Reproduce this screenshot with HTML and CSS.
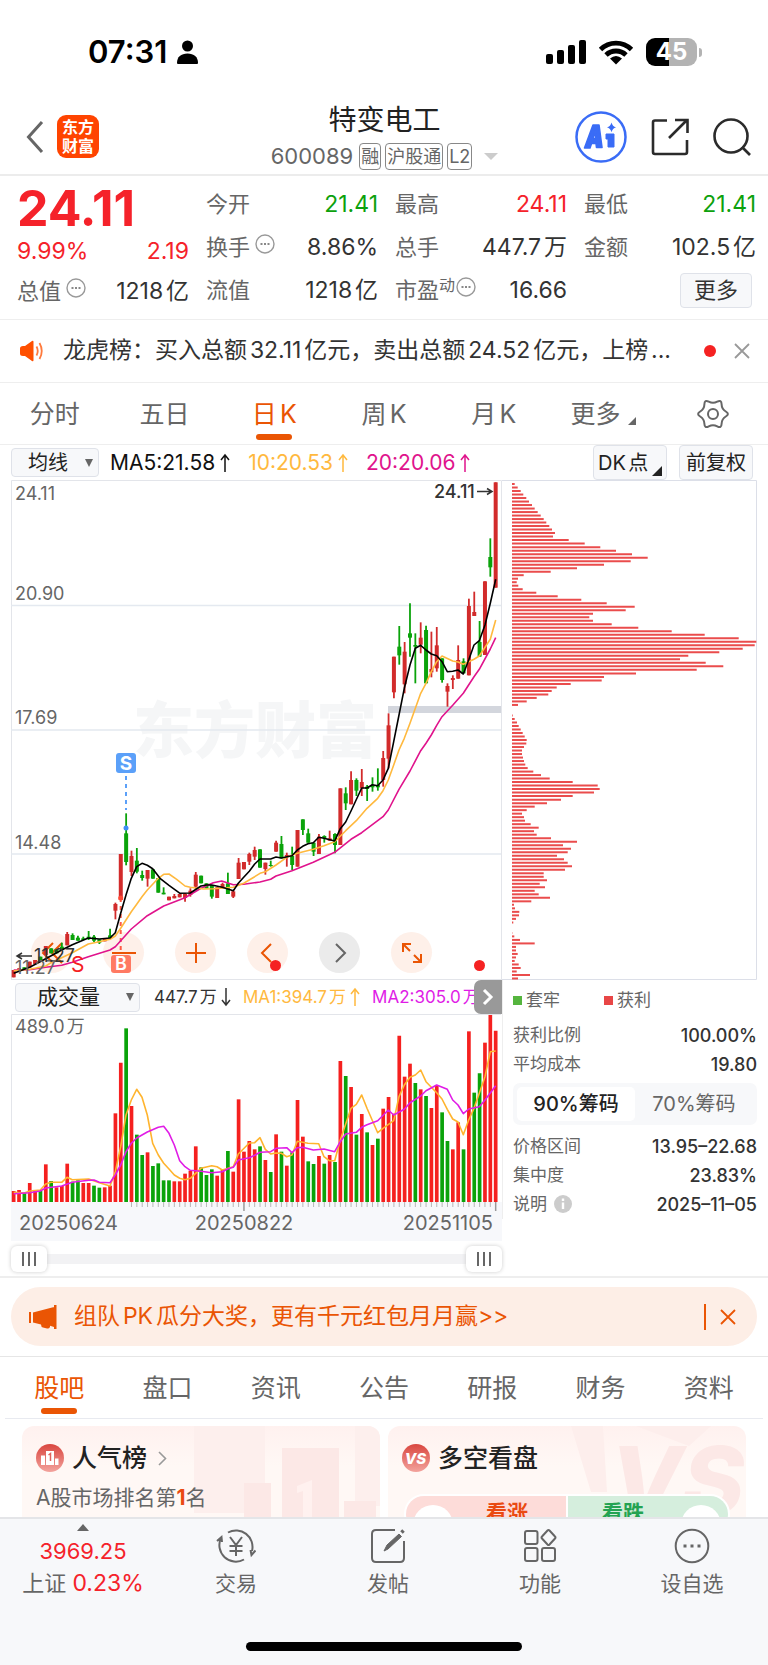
FILE: index.html
```html
<!DOCTYPE html>
<html lang="zh-CN">
<head>
<meta charset="utf-8">
<meta name="viewport" content="width=device-width, initial-scale=1">
<title>特变电工 600089</title>
<link rel="stylesheet" href="styles.css">
</head>
<body>
<div class="app">
<main class="content">

  <div class="status">
    <div class="status-left">
      <span class="clock">07:31</span>
      <svg width="21" height="24" viewBox="0 0 21 24"><circle cx="10.500" cy="6" r="5.500"/><path d="M0 23c0-6 4-9.500 10.500-9.500S21 17 21 23q0 1-1 1H1q-1 0-1-1z"/></svg>
    </div>
    <div class="status-right">
      <svg width="40" height="26" viewBox="0 0 40 26"><rect x="0" y="15" width="7" height="10" rx="2"/><rect x="11" y="11" width="7" height="14" rx="2"/><rect x="22" y="6" width="7" height="19" rx="2"/><rect x="33" y="1" width="7" height="24" rx="2"/></svg>
      <svg width="36" height="26" viewBox="0 0 36 26"><path d="M2.500 10.500a22 22 0 0 1 31 0M8 16a14.500 14.500 0 0 1 20 0" fill="none" stroke="#000" stroke-width="4.800"/><path d="M18 25.500l-6-6q6-5 12 0z"/></svg>
      <div class="battery"><span>45</span></div>
    </div>
  </div>

  <header class="header">
    <div class="header-left">
      <button class="icon-btn" aria-label="返回"><svg width="18" height="32" viewBox="0 0 18 32"><path d="M16 1L2.500 16 16 31" fill="none" stroke="#666" stroke-width="3"/></svg></button>
      <div class="logo">东方<br>财富</div>
    </div>
    <div class="header-mid">
      <h1>特变电工</h1>
      <div class="code">600089<span class="tag">融</span><span class="tag">沪股通</span><span class="tag">L2</span><i class="down"></i></div>
    </div>
    <div class="header-right">
      <button class="icon-btn" aria-label="AI"><svg width="52" height="52" viewBox="0 0 52 52"><circle cx="26" cy="26" r="24.500" fill="none" stroke="#3a6cf6" stroke-width="2.500"/><path d="M9.500 37L18 14h6l3 22.500h-5.500l-.5-4h-4.500L15 37zM18 27.500h2.700L20 20z" fill="#3a6cf6" stroke="#3a6cf6" stroke-width="1.600" stroke-linejoin="round"/><path d="M31 23h8v13h-6v-8h-2z" fill="#3a6cf6" stroke="#3a6cf6" stroke-width="1" stroke-linejoin="round"/><path d="M36.500 11.500q1 4 4.500 4.800-3.500 1-4.500 5-1-4-4.500-5 3.500-.8 4.500-4.800z" fill="#3a6cf6"/></svg></button>
      <button class="icon-btn" aria-label="分享"><svg width="38" height="38" viewBox="0 0 38 38" fill="none" stroke="#2b2b2b" stroke-width="2.600"><path d="M16 2.500H4Q2 2.500 2 4.500V34q0 2 2 2h30q2 0 2-2V22"/><path d="M18 20L35.500 2.500M24 2h12.500v13"/></svg></button>
      <button class="icon-btn" aria-label="搜索"><svg width="38" height="38" viewBox="0 0 38 38" fill="none" stroke="#2b2b2b" stroke-width="2.600"><circle cx="18" cy="18" r="16.500"/><path d="M29 29l8 8"/></svg></button>
    </div>
  </header>

  <section class="quote">
    <div class="quote-col lead">
      <div class="price">24.11</div>
      <div class="row red"><span>9.99%</span><span>2.19</span></div>
      <div class="row"><span class="k">总值<svg class="more" viewBox="0 0 20 20"><use href="#dots"/></svg></span><span>1218亿</span></div>
    </div>
    <div class="quote-col">
      <div class="row"><span class="k">今开</span><span class="green">21.41</span></div>
      <div class="row"><span class="k">换手<svg class="more" viewBox="0 0 20 20"><use href="#dots"/></svg></span><span>8.86%</span></div>
      <div class="row"><span class="k">流值</span><span>1218亿</span></div>
    </div>
    <div class="quote-col">
      <div class="row"><span class="k">最高</span><span class="red">24.11</span></div>
      <div class="row"><span class="k">总手</span><span>447.7万</span></div>
      <div class="row"><span class="k">市盈<small>动</small><svg class="more tight" viewBox="0 0 20 20"><use href="#dots"/></svg></span><span>16.66</span></div>
    </div>
    <div class="quote-col">
      <div class="row"><span class="k">最低</span><span class="green">21.41</span></div>
      <div class="row"><span class="k">金额</span><span>102.5亿</span></div>
      <div class="row end"><button class="box-btn more-btn">更多</button></div>
    </div>
  </section>

  <section class="news">
    <svg width="24" height="28" viewBox="0 0 24 28"><path d="M0 11.500q0-2.500 3-2.500h2l7-5q1.500-1 1.500 1v18q0 2-1.500 1l-7-5H3q-3 0-3-2.500z" fill="#ff5000"/><path d="M16.500 9.500q2.500 4.500 0 9M19.500 6q4.500 8 0 16" fill="none" stroke="#ff7a3c" stroke-width="1.800"/></svg>
    <a class="news-text" href="#">龙虎榜：买入总额32.11亿元，卖出总额24.52亿元，上榜...</a>
    <i class="dot"></i>
    <button class="icon-btn" aria-label="关闭"><svg width="16" height="16" viewBox="0 0 16 16"><path d="M1 1l14 14M15 1L1 15" stroke="#999" stroke-width="1.800"/></svg></button>
  </section>

  <nav class="tabs period">
    <button>分时</button><button>五日</button><button class="on">日K</button><button>周K</button><button>月K</button>
    <button class="corner">更多<i></i></button>
    <button aria-label="设置"><svg width="32" height="32" viewBox="-16 -16 32 32" fill="none" stroke="#666" stroke-width="2"><path d="M12.800-2.500Q17 0 12.800 2.500 8.700 5 8.600 9.800 8.500 14.700 4.250 12.350 0 10-4.250 12.350-8.500 14.700-8.600 9.800-8.700 5-12.800 2.500-17 0-12.800-2.500-8.700-5-8.600-9.800-8.500-14.700-4.250-12.350 0-10 4.250-12.350 8.500-14.700 8.600-9.800 8.700-5 12.800-2.500z"/><circle r="5"/></svg></button>
  </nav>

  <section class="indicator">
    <label class="select ma-select"><select aria-label="均线"><option>均线</option></select></label>
    <span class="ma black">MA5:21.58<svg class="arw" viewBox="0 0 10 20"><use href="#arrow"/></svg></span>
    <span class="ma orange">10:20.53<svg class="arw" viewBox="0 0 10 20"><use href="#arrow"/></svg></span>
    <span class="ma pink">20:20.06<svg class="arw" viewBox="0 0 10 20"><use href="#arrow"/></svg></span>
    <button class="box-btn dk">DK点<i></i></button>
    <button class="box-btn">前复权</button>
  </section>

  <section class="charts">
    <div class="left">
      <div class="stage">
        <svg id="kline" class="plot" viewBox="11 480 491 500"></svg>
        <div class="tools">
          <button aria-label="最早"><svg viewBox="0 0 24 24"><path d="M13 2L3 12l10 10M22 2L12 12l10 10"/></svg></button>
          <button aria-label="缩小"><svg viewBox="0 0 24 24"><path d="M0 12h24"/></svg></button>
          <button aria-label="放大"><svg viewBox="0 0 24 24"><path d="M2 12h20M12 2v20"/></svg></button>
          <button aria-label="前移"><svg viewBox="0 0 24 24"><path d="M15 3l-9 9 9 9"/></svg></button>
          <button class="grey" aria-label="后移"><svg viewBox="0 0 24 24"><path d="M8 3l9 9-9 9"/></svg></button>
          <button aria-label="全屏"><svg viewBox="0 0 24 24"><path d="M3 11V3h8M3 3l7 7M21 13v8h-8M21 21l-7-7"/></svg></button>
        </div>
        <i class="dot d1"></i><i class="dot d2"></i>
      </div>
      <div class="vol-head">
        <label class="select vol-select"><select aria-label="成交量"><option>成交量</option></select></label>
        <span>447.7万<svg class="arw flip" viewBox="0 0 10 20"><use href="#arrow"/></svg></span>
        <span class="orange">MA1:394.7万<svg class="arw" viewBox="0 0 10 20"><use href="#arrow"/></svg></span>
        <span class="violet">MA2:305.0万<svg class="arw" viewBox="0 0 10 20"><use href="#arrow"/></svg></span>
        <button class="next" aria-label="更多指标"><svg width="12" height="18" viewBox="0 0 12 18"><path d="M2 2l7 7-7 7" fill="none" stroke="#fff" stroke-width="3"/></svg></button>
      </div>
      <svg id="volume" class="plot" viewBox="11 1014 491 227"></svg>
      <div class="range">
        <input type="range" min="0" max="100" value="0" aria-label="开始日期">
        <input type="range" min="0" max="100" value="100" aria-label="结束日期">
      </div>
    </div>

    <div class="right">
      <svg id="chips" class="plot" viewBox="502 480 255 500"></svg>
      <div class="chip-info">
        <div class="legend"><span><i class="sq g"></i>套牢</span><span><i class="sq r"></i>获利</span></div>
        <div class="info"><span>获利比例</span><b>100.00%</b></div>
        <div class="info"><span>平均成本</span><b>19.80</b></div>
        <div class="toggle"><button class="on">90%筹码</button><button>70%筹码</button></div>
        <div class="info"><span>价格区间</span><b>13.95–22.68</b></div>
        <div class="info"><span>集中度</span><b>23.83%</b></div>
        <div class="info"><span>说明<svg width="18" height="18" viewBox="0 0 18 18"><circle cx="9" cy="9" r="9" fill="#ccc"/><path d="M9 3.500v2.500M9 7.500v6.500" stroke="#fff" stroke-width="2.400"/></svg></span><b>2025–11–05</b></div>
      </div>
    </div>
  </section>

  <section class="promo-wrap">
    <div class="promo">
      <svg width="28" height="24" viewBox="0 0 28 24" fill="#ea5504"><path d="M0 7h2v11H0zM4 7.500L25 2v20l-4-1.200V22q-1 2-3 1.500l-4-1q-2-.5-2-3L4 17.500zM25 0h2.500v24H25z"/></svg>
      <a href="#">组队PK瓜分大奖，更有千元红包月月赢&gt;&gt;</a>
      <button class="icon-btn" aria-label="关闭"><svg width="16" height="16" viewBox="0 0 16 16"><path d="M1 1l14 14M15 1L1 15" stroke="#ea5504" stroke-width="1.800"/></svg></button>
    </div>
  </section>

  <nav class="tabs info-tabs">
    <button class="on">股吧</button><button>盘口</button><button>资讯</button><button>公告</button><button>研报</button><button>财务</button><button>资料</button>
  </nav>

  <section class="cards">
    <article class="card">
      <svg class="deco" viewBox="0 0 190 140" preserveAspectRatio="xMaxYMin slice"><g fill="#fdefed"><path d="M4 0h71v57H55v30H4zM165 0h25v80h-25z"/></g><g fill="#fce8e6"><path d="M92 22h57v118H92zM54 57h27v83H54zM154 75h32v65h-32z"/></g><path d="M107 60l15-6v50h-9V65l-6 2z" fill="#fff1ef"/></svg>
      <h2><svg width="28" height="28" viewBox="0 0 28 28"><circle cx="14" cy="14" r="14" fill="url(#badge)"/><path d="M10 7h8v14h-8zM5 11.500h4V21H5zM19 14.500h3.500V21H19z" fill="#fff"/><path d="M12.500 11l2-1.500V17" fill="none" stroke="#e0635c" stroke-width="1.500"/></svg>人气榜<svg class="chev" width="9" height="15" viewBox="0 0 9 15"><path d="M1 1l6.500 6.500L1 14" fill="none" stroke="#999" stroke-width="1.600"/></svg></h2>
      <p>A股市场排名第<b>1</b>名</p>
    </article>
    <article class="card">
      <svg class="deco" viewBox="0 0 190 140" preserveAspectRatio="xMaxYMin slice"><path d="M15 0h32l4 66H35zM80 0h75l-22 20z" fill="#fdeeec"/><text x="54" y="88" font-size="94" font-weight="800" font-style="italic" fill="#fce8e6">VS</text></svg>
      <h2><svg width="28" height="28" viewBox="0 0 28 28"><circle cx="14" cy="14" r="14" fill="url(#badge)"/><text x="13.500" y="19.500" text-anchor="middle" font-size="15" font-weight="800" font-style="italic" fill="#fff">VS</text></svg>多空看盘</h2>
      <div class="duel"><span class="up">看涨</span><span class="down-side">看跌</span></div>
    </article>
  </section>
</main>

<footer class="bottom">
  <div class="bar">
    <a class="index" href="#"><i></i><span class="red">3969.25</span><span>上证 <em>0.23%</em></span></a>
    <a href="#"><svg viewBox="0 0 40 36"><path d="M12 4.500A16.500 16.500 0 0 1 36 23M28 31.500A16.500 16.500 0 0 1 5 10M1 13l4.500-4 .5 5M39.500 22.500l-4 4.500-1-5M14 9l6 8 6-8M20 17v11M13.500 18h13M13.500 23h13"/></svg>交易</a>
    <a href="#"><svg viewBox="0 0 40 36"><path d="M27 2H8Q4 2 4 6v24q0 4 4 4h24q4 0 4-4V13"/><path d="M16 23l3-6L31 6l2.500 2.500L20 21z" fill="#666" stroke-width="1"/><path d="M33.500 4.500l2-2" stroke-width="3.500"/></svg>发帖</a>
    <a href="#"><svg viewBox="0 0 40 36"><rect x="5" y="3" width="12.500" height="13" rx="2"/><rect x="5" y="20" width="12.500" height="13" rx="2"/><rect x="22" y="20" width="13" height="13" rx="2"/><path d="M27.500 2.500q1-1 2 0l5.500 6q1 1 0 2l-5.500 6q-1 1-2 0L22 10.500q-1-1 0-2z"/></svg>功能</a>
    <a href="#"><svg viewBox="0 0 40 36"><circle cx="20" cy="18" r="16.300"/><path d="M11.500 18h3M18.500 18h3M25.500 18h3" stroke-width="3"/></svg>设自选</a>
  </div>
  <div class="home"></div>
</footer>
</div>

<svg class="defs" width="0" height="0" aria-hidden="true">
  <defs>
    <linearGradient id="badge" x1="0" y1="0" x2="0" y2="1"><stop offset="0" stop-color="#d9463f"/><stop offset="1" stop-color="#f3a39d"/></linearGradient>
    <g id="dots"><circle cx="10" cy="10" r="9" fill="none" stroke="#999" stroke-width="1.400"/><path d="M5.500 10h2M9 10h2M12.500 10h2" stroke="#888" stroke-width="1.800"/></g>
    <path id="arrow" d="M5 19V2M1 7l4-5 4 5" fill="none" stroke="currentColor" stroke-width="1.500"/>
  </defs>
</svg>
<script src="charts.js"></script>
</body>
</html>
```

FILE: styles.css
```css
* { box-sizing: border-box; }
body {
  margin: 0;
  background: #fff;
  color: #333;
  font-family: Inter, "Noto Sans CJK SC", sans-serif;
  font-size: 22px;
  line-height: 1.2;
  text-autospace: normal;
}
button, select { font: inherit; color: inherit; background: none; border: 0; padding: 0; margin: 0; text-autospace: inherit; }
a { color: inherit; text-decoration: none; }
svg { display: block; flex: none; }
.defs { position: absolute; }
.app { height: 100vh; display: flex; flex-direction: column; }
.content { flex: 1; min-height: 0; overflow: hidden; }

.red { color: #f5222a; }
.green { color: #0da10d; }
.orange { color: #ffb93e; }
.pink { color: #e0138c; }
.violet { color: #e01ce6; }
.black { color: #111; }
.dot { width: 12px; height: 12px; border-radius: 50%; background: #f52222; flex: none; }
.icon-btn { display: block; }
.box-btn { background: #f7f8fa; border: 1px solid #dfe2e9; border-radius: 4px; white-space: nowrap; }

.status { height: 98px; padding: 6px 66px 0 88px; display: flex; align-items: center; justify-content: space-between; }
.status-left { display: flex; align-items: center; gap: 10px; }
.clock { font-size: 31px; font-weight: 600; color: #000; }
.status-right { display: flex; align-items: center; gap: 12px; }
.battery {
  position: relative; width: 51px; height: 28px; border-radius: 9px; margin-right: 5px;
  background: linear-gradient(90deg, #000 45%, #b3b3b3 45%);
  color: #fff; font-size: 24px; font-weight: 700; line-height: 28px; text-align: center;
}
.battery::after { content: ""; position: absolute; right: -5px; top: 10px; width: 3px; height: 9px; border-radius: 0 3px 3px 0; background: #b3b3b3; }

.header { height: 78px; padding: 0 17px 0 26px; display: grid; grid-template-columns: 1fr auto 1fr; align-items: center; border-bottom: 2px solid #ececec; }
.header-left { display: flex; align-items: center; gap: 13px; }
.logo { width: 42px; height: 43px; border-radius: 9px; background: #ff4400; color: #fff; font-family: "Noto Sans CJK SC", sans-serif; font-size: 16px; font-weight: 700; line-height: 19px; text-align: center; padding-top: 2px; }
.header-mid { text-align: center; padding: 5px 8px 0 0; }
.header h1 { margin: 0; font-size: 28px; font-weight: 400; line-height: 34px; color: #222; }
.code { display: flex; align-items: center; gap: 4px; color: #666; font-size: 22px; line-height: 38px; }
.tag { border: 1px solid #888; border-radius: 4px; font-size: 18px; line-height: 25px; padding: 0 1px; }
.tag:first-of-type { margin-left: 2px; }
.down { border: 7px solid transparent; border-top-color: #ccc; border-bottom: 0; margin-left: 8px; }
.header-right { display: flex; align-items: center; justify-content: flex-end; gap: 24px; }

.quote { display: grid; grid-template-columns: repeat(4, 1fr); gap: 17px; padding: 7px 12px 7px 17px; border-bottom: 1px solid #eee; }
.row { height: 43px; display: flex; align-items: center; justify-content: space-between; white-space: nowrap; font-size: 23px; }
.row.end { justify-content: flex-end; font-size: 22px; }
.k { color: #666; display: flex; align-items: center; font-size: 22px; }
.k small { font-size: 16px; align-self: flex-start; line-height: 16px; }
.more { width: 20px; height: 20px; align-self: flex-start; margin-left: 5px; }
.more.tight { margin-left: 1px; }
.lead .price { height: 50px; line-height: 50px; font-size: 50px; font-weight: 700; color: #f5222a; }
.lead .row { height: 38px; }
.lead .row:last-child { height: 41px; }
.more-btn { width: 72px; height: 35px; margin-right: 4px; }

.news { height: 63px; padding: 0 18px 0 20px; display: flex; align-items: center; border-bottom: 1px solid #eee; }
.news-text { flex: 1; margin-left: 19px; font-size: 23px; white-space: nowrap; overflow: hidden; }
.news .dot { margin-right: 18px; }

.tabs { display: flex; font-size: 25px; color: #666; }
.tabs button { flex: 1; height: 61px; position: relative; display: flex; align-items: center; justify-content: center; }
.tabs .on { color: #ea5504; }
.tabs .on::after { content: ""; position: absolute; bottom: 4px; width: 36px; height: 6px; border-radius: 3px; background: #ea5504; }
.period { border-bottom: 1px solid #eee; }
.corner i { align-self: flex-end; margin: 0 0 19px 8px; border: 4px solid #666; border-top-color: transparent; border-left-color: transparent; }
.info-tabs { margin: 0 5px; border-bottom: 1px solid #e8eaf0; }

.indicator { height: 35px; padding: 0 15px 0 11px; display: flex; align-items: center; font-size: 20px; white-space: nowrap; }
.ma { margin-right: 18px; display: flex; align-items: center; font-size: 21px; }
.arw { width: 10px; height: 20px; margin-left: 5px; }
.flip { transform: rotate(180deg); }
.select { position: relative; background: #f7f8fa; border: 1px solid #dfe2e9; border-radius: 4px; color: #222; }
.select select { appearance: none; width: 100%; height: 100%; display: block; }
.select::after { content: ""; position: absolute; right: 5px; top: 50%; margin-top: -4px; border: 4px solid transparent; border-top: 8px solid #666; border-bottom: 0; pointer-events: none; }
.ma-select { width: 88px; height: 29px; margin-right: 11px; }
.ma-select select { padding-left: 16px; }
.indicator .box-btn { width: 74px; height: 35px; color: #222; }
.dk { margin-left: auto; margin-right: 12px; position: relative; text-align: left; }
.indicator .dk { padding-left: 4px; }
.dk i { position: absolute; right: 4px; bottom: 3px; border: 5px solid #222; border-top-color: transparent; border-left-color: transparent; }

.charts { display: grid; grid-template-columns: 491fr 255fr; padding: 0 11px; border-bottom: 2px solid #eee; }
.plot { width: 100%; height: auto; }
.plot text { font-family: Inter, "Noto Sans CJK SC", sans-serif; }
.left { min-width: 0; }
.stage { position: relative; }
.stage .plot { position: relative; z-index: 1; pointer-events: none; }
.tools { position: absolute; left: 20px; bottom: 7px; display: flex; gap: 31px; }
.tools button { width: 41px; height: 41px; border-radius: 50%; background: #fef0e9; display: grid; place-items: center; }
.tools svg { width: 24px; height: 24px; fill: none; stroke: #ea5504; stroke-width: 2; }
.tools .grey { background: #ebebeb; }
.tools .grey svg { stroke: #666; }
.stage .dot { position: absolute; bottom: 9px; width: 11px; height: 11px; }
.d1 { left: 259px; }
.d2 { right: 17px; }
.vol-head { height: 34px; display: flex; align-items: center; font-size: 17px; white-space: nowrap; position: relative; overflow: hidden; padding-left: 4px; }
.vol-head span { display: flex; align-items: center; margin-right: 12px; }
.vol-head .arw { margin-left: 4px; }
.vol-select { width: 125px; height: 29px; margin-right: 14px; font-size: 21px; flex: none; }
.vol-select select { padding-left: 21px; }
.next { position: absolute; right: 0; top: 0; width: 28px; height: 34px; border-radius: 7px 0 0 7px; background: #999; display: grid; place-items: center; }

.range { display: grid; align-items: center; height: 35px; background: linear-gradient(#f2f2f4, #f2f2f4) center / 100% 10px no-repeat; }
.range input { grid-area: 1 / 1; appearance: none; width: 100%; height: 26px; margin: 0; background: none; pointer-events: none; }
.range input::-webkit-slider-thumb {
  appearance: none; pointer-events: auto; width: 36px; height: 26px; border-radius: 6px; box-shadow: 0 0 4px #ccc;
  background: linear-gradient(90deg, #666 2px, transparent 2px 6px, #666 6px 8px, transparent 8px 12px, #666 12px 14px) center / 14px 14px no-repeat, #fff;
}

.right { min-width: 0; }
.chip-info { padding-left: 10px; font-size: 17px; color: #666; border-left: 1px solid #eee; }
.legend { display: flex; height: 41px; align-items: center; gap: 44px; }
.legend span { display: flex; align-items: center; gap: 4px; }
.sq { width: 9px; height: 9px; }
.sq.g { background: #55b53e; }
.sq.r { background: #e84646; }
.info { height: 29px; display: flex; justify-content: space-between; align-items: center; }
.info span { display: flex; align-items: center; gap: 7px; }
.info b { font-weight: 500; color: #333; font-size: 18px; }
.toggle { display: flex; height: 42px; margin: 4px 0 7px; padding: 4px; border-radius: 7px; background: #f7f8fa; font-size: 20px; text-autospace: no-autospace; }
.toggle button { flex: 1; border-radius: 5px; }
.toggle .on { background: #fff; color: #222; font-weight: 500; }

.promo-wrap { padding: 9px 11px 10px; border-bottom: 1px solid #e6e6e6; }
.promo { height: 59px; border-radius: 30px; background: #fdeee6; color: #ea5504; display: flex; align-items: center; padding: 0 21px 0 18px; }
.promo a { flex: 1; margin-left: 17px; font-size: 23px; white-space: nowrap; }
.promo .icon-btn { border-left: 2px solid #ea5504; padding: 5px 0 5px 14px; }

.cards { display: grid; grid-template-columns: 1fr 1fr; gap: 8px; padding: 7px 22px; }
.card { position: relative; overflow: hidden; height: 160px; border-radius: 12px; padding: 14px; background: linear-gradient(#fff1ef, #fff8f5 40px); }
.deco { position: absolute; right: 0; top: 0; width: 190px; height: 140px; }
.card h2 { position: relative; margin: 0; display: flex; align-items: center; gap: 8px; font-size: 25px; font-weight: 500; line-height: 36px; color: #222; }
.chev { margin-left: 3px; }
.card p { position: relative; margin: 8px 0 0; font-size: 21px; line-height: 28px; color: #666; text-autospace: no-autospace; }
.card p b { color: #ea4a12; }
.duel { position: relative; margin: 18px 2px 0; height: 40px; border: 2px solid #fff; border-radius: 26px; display: grid; grid-template-columns: 1fr 1fr; overflow: hidden; font-size: 21px; font-weight: 700; line-height: 34px; gap: 2px; background: #fff; }
.duel::before, .duel::after { content: ""; position: absolute; top: 9px; width: 40px; height: 40px; border-radius: 50%; background: #fff; }
.duel::before { left: 7px; }
.duel::after { right: 7px; }
.up { background: #fddcd9; color: #ea4a12; padding-left: 80px; }
.down-side { background: #d5eedd; color: #24a352; padding-left: 34px; }

.bottom { height: 148px; flex: none; background: #f7f8fa; border-top: 2px solid #e4e5e8; }
.bar { display: flex; font-size: 21px; color: #666; }
.bar a { width: 152px; height: 86px; padding-top: 9px; display: flex; flex-direction: column; align-items: center; line-height: 24px; }
.bar svg { width: 40px; height: 36px; margin-bottom: 8px; fill: none; stroke: #666; stroke-width: 2; }
.bar .index { flex: 1; padding: 5px 0 0 6px; font-size: 22px; }
.index i { border: 6px solid transparent; border-bottom: 7px solid #666; border-top: 0; }
.index span { margin-top: 8px; white-space: nowrap; }
.index em { font-style: normal; color: #f5222a; font-size: 23px; }
.home { width: 276px; height: 9px; margin: 37px auto 0; border-radius: 5px; background: #000; }
```

FILE: charts.js
```js
const RED = '#d22b2b', GREEN = '#0aa30a', VRED = '#f5201f';
const STEP = 16.067, X0 = 41;
const x = i => (X0 + STEP * i) / 3;
const line = (pts, oy, color) =>
  `<polyline fill="none" stroke="${color}" stroke-width="1.6" stroke-linejoin="round" points="${
    pts.trim().split(/\s+/).map(p => { const [a, b] = p.split(','); return (a / 3).toFixed(1) + ',' + (oy + b / 3).toFixed(1); }).join(' ')}"/>`;
const text = (tx, ty, s, size, fill, extra = '') => `<text x="${tx}" y="${ty}" font-size="${size}" fill="${fill}" ${extra}>${s}</text>`;

/* body top, body bottom, high, low (thirds of a pixel), sign: r rise, g fall */
const candles = `r1500,1522 r1495,1505 g1492,1500 r1475,1492 r1470,1482 g1460,1475 r1428,1455 g1435,1450 g1438,1450 g1430,1440,1418 r1392,1426,1386
g1395,1410,1390 g1403,1412,1397 g1405,1410,1400 g1400,1406,1383,1410 g1400,1412,1395,1416 g1408,1418,1408,1422 r1404,1414 g1396,1404,1376 r1302,1322,1298,1348
r1152,1290 g1090,1176,1030,1186 r1158,1206,1142,1218 g1172,1205,1134,1210 g1215,1224,1202,1232 r1200,1226,1200,1250 g1198,1226 g1224,1268 g1268,1273,1252 r1280,1291
r1278,1285,1272 r1272,1282 r1272,1284,1270,1295 r1262,1275,1255,1280 r1214,1250,1206,1256 g1217,1240 g1240,1255 g1245,1280,1245,1286 r1252,1284 r1242,1255,1238
g1240,1272,1208 r1264,1280,1262,1284 r1178,1227,1164 r1176,1198 r1152,1175,1148,1185 r1140,1160,1130,1170 g1138,1193 r1178,1197,1178,1214 g1185,1188,1172,1190 r1118,1145,1112
g1122,1165,1098 r1155,1160,1148,1190 g1158,1185,1130,1200 r1080,1190 g1048,1080,1048,1095 g1090,1118,1076 g1118,1145,1118,1158 r1100,1152,1092 g1098,1104,1096,1118 r1105,1112,1082
g1092,1125,1090,1150 r955,1125 g970,1000,952,1020 r930,1003,904 g930,962,925,978 r936,955,897,978 g950,957,945,993 g945,952,922,965 g945,952,895,962 r864,930,843,950
r766,866,730,895 r560,667,560,685 g530,556,468,584 r545,643,516,670 g490,503,400,560 g525,530,490,640 r503,524,457,550 g480,640,467 r597,607,485,622 r526,595,471,605
g565,630,565,638 r648,665,640,710 r624,630,616,657 r570,626,526 g574,610,565 r408,616,386 r426,438,365 g516,560,453 r334,555 g261,292,205,320 r37,353`.split(/\s+/);

const ma5 = `41,1510 89,1492 137,1466 185,1440 217,1424 265,1404 298,1407 330,1404 346,1388 362,1330 378,1275 394,1225 410,1190 426,1180 442,1186 458,1196 480,1225 507,1246 540,1270 571,1269 603,1248 619,1245 635,1245 667,1252 700,1262 715,1240 731,1222 748,1204 764,1182 780,1167 812,1167 828,1161 844,1164 876,1157 892,1140 908,1129 924,1121 940,1118 956,1102 972,1105 1004,1113 1021,1076 1037,1056 1053,1023 1085,954 1101,954 1117,944 1133,947 1149,930 1165,895 1181,815 1197,735 1213,655 1230,585 1246,535 1262,526 1278,540 1294,552 1310,557 1326,575 1342,605 1358,604 1374,600 1390,612 1406,570 1422,525 1438,512 1455,465 1471,400 1487,328`;
const ma10 = `41,1502 89,1498 137,1488 153,1478 217,1448 265,1422 298,1415 330,1408 346,1398 362,1375 394,1325 410,1303 426,1280 442,1260 475,1225 491,1213 507,1212 530,1228 555,1248 571,1252 610,1257 640,1256 700,1252 731,1240 764,1220 780,1210 796,1205 828,1185 860,1162 892,1150 940,1138 972,1127 1004,1115 1037,1082 1069,1052 1101,1015 1133,985 1149,962 1165,930 1181,885 1197,840 1213,805 1230,760 1262,670 1278,640 1294,605 1310,575 1326,558 1358,573 1374,576 1390,583 1422,568 1438,558 1471,508 1487,450`;
const ma20 = `41,1500 89,1499 137,1492 185,1486 217,1477 265,1460 330,1440 346,1430 394,1377 442,1337 491,1308 555,1283 603,1255 640,1238 665,1233 700,1244 731,1243 780,1236 812,1228 828,1218 876,1202 940,1177 1004,1147 1053,1108 1085,1088 1149,1040 1165,1020 1197,958 1230,903 1262,842 1278,820 1294,795 1310,766 1326,740 1358,706 1390,670 1422,620 1438,598 1471,537 1487,503`;

let k = `<path d="M11.500 980V480.500H501.500V980" fill="none" stroke="#e3e5ea"/><path d="M11 979.500H502" stroke="#e3e5ea"/>`;
k += text(133, 753, '东方财富', 61, '#f5f6f7', 'font-weight="900"');
k += `<path d="M11 605.500H501M11 730H501M11 854H501" stroke="#e4e9f0" stroke-width="1.400"/>`;
k += `<rect x="388" y="706" width="113" height="7" fill="#d3d6dd"/>`;
candles.forEach((c, i) => {
  const [t, b, h = t, l = b] = c.slice(1).split(',').map(Number);
  const col = c[0] === 'r' ? RED : GREEN;
  k += `<path d="M${x(i)} ${470 + h / 3}V${470 + l / 3}" stroke="${col}" stroke-width="1.800"/><path d="M${x(i)} ${470 + t / 3}V${470 + b / 3}" stroke="${col}" stroke-width="4"/>`;
});
k += `<path d="M126 776v34" stroke="#5ba0f9" stroke-width="2" stroke-dasharray="4 4"/><circle cx="126" cy="828" r="2.500" fill="#3d8df5"/>`;
k += `<path d="M120.700 898v56" stroke="#ff5a45" stroke-width="2" stroke-dasharray="4 4"/><circle cx="120.700" cy="898" r="2.500" fill="#ff4a35"/>`;
k += line(ma20, 470, '#e0138c') + line(ma10, 470, '#ffb93e') + line(ma5, 470, '#000');
k += `<rect x="116" y="753" width="20" height="20" rx="3" fill="#5ba0f9"/>` + text(126, 770, 'S', 19, '#fff', 'font-weight="700" text-anchor="middle"');
k += `<rect x="111" y="955" width="20" height="18" rx="3" fill="#ff7a63"/>` + text(121, 970, 'B', 18, '#fff', 'font-weight="600" text-anchor="middle"');
[[500, '24.11'], [600, '20.90'], [724, '17.69'], [849, '14.48'], [974, '11.27']].forEach(([ty, s]) => k += text(15, ty, s, 18, '#666'));
k += text(34, 962, '11.27', 18, '#333') + `<path d="M32 956H18M22 953l-5 3 5 3" fill="none" stroke="#333" stroke-width="1.500"/>`;
k += text(71, 972, 'S', 21, '#f5201f');
k += text(434, 498, '24.11', 18, '#333', 'font-weight="500"') + `<path d="M477 491.500h14M487 488.500l5 3-5 3" fill="none" stroke="#333" stroke-width="1.500"/>`;
document.getElementById('kline').innerHTML = k;

const volumes = `r573 r570 g578 r549 r570 g572 r493 g543 r562 r558 r491 g545 g541 r549 r549 g557 g563 r562 r557 r340 r188 g85 r318 g404 g465 r457 g498 g490 g541 g541 r544 r544 r521 r512 r439 g502 g525 g508 r527 r508 g453 r515 r298 r455 r423 r448 g439 r480 g516 r403 g455 r497 g457 r300 r410 g484 g492 r468 g491 r465 g486 r183 g228 r261 g404 r342 g397 r435 g416 r326 r291 r341 r107 r230 r191 g249 r268 g288 r324 r255 g337 g423 r448 r367 g448 r94 g278 g220 r128 r45 r92`.split(' ');
const vma1 = `41,577 73,579 89,573 121,570 137,552 153,547 185,547 201,532 217,539 266,537 298,548 330,558 346,515 362,440 378,345 394,300 410,268 426,292 442,345 458,430 475,465 491,490 507,507 523,525 539,535 555,539 571,535 603,505 635,497 651,500 667,510 700,500 715,462 748,429 764,428 780,413 796,448 812,462 828,459 844,460 860,470 876,465 892,424 924,430 956,431 972,470 988,482 1004,482 1021,420 1037,372 1053,325 1069,313 1085,285 1101,325 1133,398 1149,385 1181,362 1197,290 1213,255 1230,232 1246,225 1262,210 1278,245 1310,278 1326,297 1342,328 1358,357 1374,366 1390,404 1406,360 1422,325 1438,280 1455,230 1471,155 1487,153`;
const vma2 = `41,581 89,578 121,573 137,564 185,558 217,547 266,541 282,540 298,547 330,548 346,525 362,495 378,455 394,430 410,414 442,396 475,382 491,379 507,400 523,435 539,482 555,500 571,511 603,514 635,518 667,515 684,506 700,502 715,480 748,473 764,466 780,457 812,455 828,445 860,443 876,458 892,443 908,442 940,450 972,447 1004,455 1021,425 1037,402 1069,397 1085,382 1101,374 1133,362 1165,330 1181,345 1213,328 1230,308 1262,288 1278,272 1310,255 1342,268 1358,300 1374,315 1390,341 1406,327 1438,320 1455,300 1487,257`;

let v = `<rect x="11" y="1202" width="491" height="39" fill="#f7f8fb"/><path d="M11.500 1202V1014.500H501" fill="none" stroke="#e3e5ea"/>`;
volumes.forEach((s, i) => {
  v += `<path d="M${x(i)} 1202V${1000 + s.slice(1) / 3}" stroke="${s[0] === 'r' ? VRED : GREEN}" stroke-width="3.700"/>`;
  if (i > 21) v += `<path d="M${x(i)} 1202v${i === 43 || i === 90 ? 9 : 5}" stroke="#999" stroke-width="${i === 43 || i === 90 ? 1.5 : .7}"/>`;
});
v += line(vma1, 1000, '#ffb42e') + line(vma2, 1000, '#e01ce6');
v += text(15, 1033, '489.0万', 18, '#666');
v += text(19, 1230, '20250624', 20, '#666') + text(244, 1230, '20250822', 20, '#666', 'text-anchor="middle"') + text(493, 1230, '20251105', 20, '#666', 'text-anchor="end"');
document.getElementById('volume').innerHTML = v;

/* right ends of the cost distribution bars, from 24.11 down to 11.27 */
const chips = [44,53,62,70,79,87,96,104,113,122,131,139,148,156,165,159,206,254,301,348,396,443,392,312,231,152,71,54,50,55,68,109,173,244,320,404,377,279,268,279,335,415,515,614,716,769,764,728,658,565,540,617,670,590,408,312,305,212,170,155,145,110,80,54,0,0,
38,44,51,56,62,68,74,80,79,72,66,66,69,72,76,83,100,123,149,218,293,299,282,218,183,141,104,80,66,72,75,92,116,102,110,153,231,189,213,203,171,192,203,216,195,131,131,141,119,135,104,116,150,94,42,45,58,57,48,40,0,0,37,43,60,104,48,48,53,48,44,56,62,50,90,54];
let c = `<path d="M502 480.500H756.500V979.500H502" fill="none" stroke="#dcdfe8"/>`;
chips.forEach((e, i) => { if (e) c += `<path d="M512 ${(484 + i * 3.507).toFixed(2)}h${((e - 36) / 3).toFixed(1)}" stroke="#ea4c4c" stroke-width="2"/>`; });
document.getElementById('chips').innerHTML = c;
```
